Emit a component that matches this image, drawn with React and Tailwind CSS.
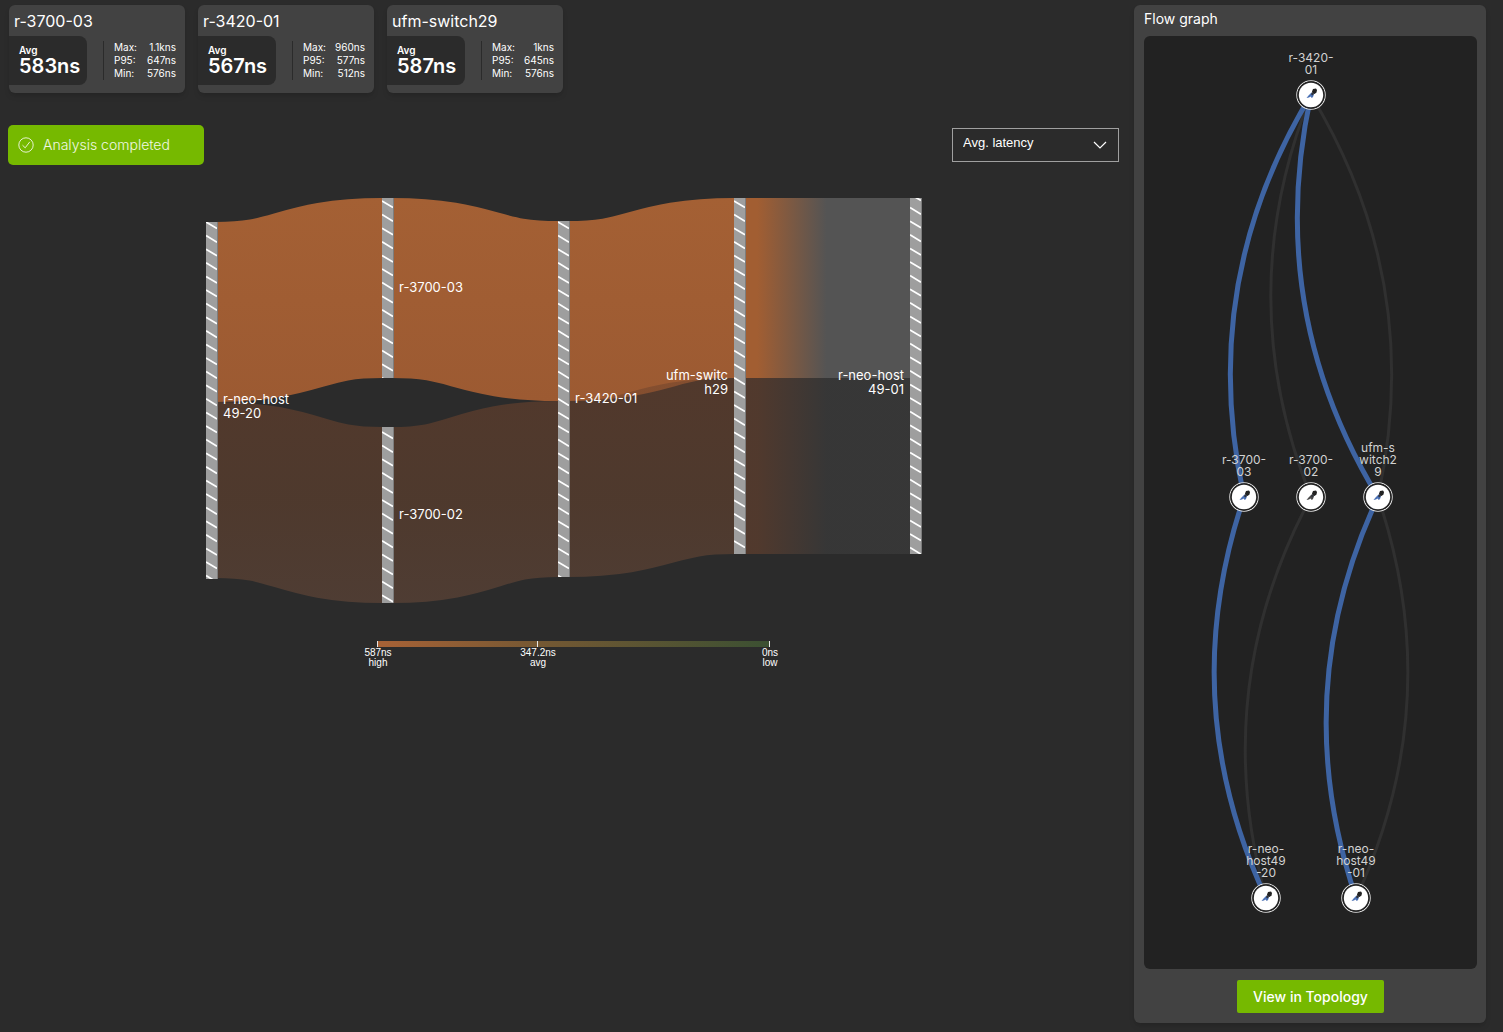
import { useId } from "react";

const stats = [
  { name: "r-3700-03", avg: "583ns", max: "1.1kns", p95: "647ns", min: "576ns" },
  { name: "r-3420-01", avg: "567ns", max: "960ns", p95: "577ns", min: "512ns" },
  { name: "ufm-switch29", avg: "587ns", max: "1kns", p95: "645ns", min: "576ns" },
];

function StatCard({ name, avg, max, p95, min }) {
  const rows = [
    ["Max:", max],
    ["P95:", p95],
    ["Min:", min],
  ];
  return (
    <section className="w-44 rounded-md bg-[#424242] pb-2 shadow-md">
      <h2 className="px-[5px] pt-1 pb-[3px] text-base leading-6 text-white">{name}</h2>
      <div className="flex items-center">
        <div className="w-[78px] rounded-r-lg bg-[#2b2b2b] py-2 pl-2.5 text-white">
          <div className="text-[10px] leading-3 font-semibold">Avg</div>
          <div className="text-xl leading-[21px] font-semibold">{avg}</div>
        </div>
        <dl className="ml-4 flex-1 border-l border-[#2b2b2b] pr-[9px] pl-2.5 text-[10px] leading-[13px] text-white">
          {rows.map(([label, value]) => (
            <div key={label} className="flex justify-between">
              <dt>{label}</dt>
              <dd>{value}</dd>
            </div>
          ))}
        </dl>
      </div>
    </section>
  );
}

const NODE_W = 11;
const bars = [
  { x: 0, y: 32, h: 357, phase: 32 },
  { x: 176, y: 8, h: 180, phase: 11 },
  { x: 176, y: 237, h: 176, phase: 242 },
  { x: 352, y: 31, h: 356, phase: 32 },
  { x: 528, y: 8, h: 356, phase: 11 },
  { x: 704, y: 8, h: 356, phase: 4 },
];

function Bar({ x, y, h, phase }) {
  const id = useId();
  const count = Math.ceil(h / 13.6) + 2;
  return (
    <g>
      <clipPath id={id}>
        <rect x={x + 1} y={y} width={NODE_W} height={h} />
      </clipPath>
      <rect x={x + 1} y={y} width={NODE_W + 1} height={h} fill="#7d7d7d" />
      <rect x={x + 1} y={y} width={NODE_W} height={h} fill="#9e9e9e" />
      <g clipPath={`url(#${id})`} stroke="#ffffff" strokeWidth="1.7">
        {Array.from({ length: count }, (_, i) => {
          const top = phase + (i - 1) * 13.6;
          return <line key={i} x1={x + 1} y1={top} x2={x + 12} y2={top + 6.6} />;
        })}
      </g>
    </g>
  );
}

function band(x, y1, y2) {
  const a = x + NODE_W;
  const b = x + 177;
  const m = (a + b) / 2;
  return `M${a} ${y1}C${m} ${y1} ${m} ${y2} ${b} ${y2}`;
}

const barLabels = [
  { x: 18, y: 214, lines: ["r-neo-host", "49-20"] },
  { x: 194, y: 102, lines: ["r-3700-03"] },
  { x: 194, y: 329, lines: ["r-3700-02"] },
  { x: 370, y: 213, lines: ["r-3420-01"] },
  { x: 523, y: 190, lines: ["ufm-switc", "h29"], end: true },
  { x: 699, y: 190, lines: ["r-neo-host", "49-01"], end: true },
];

const ticks = [
  { x: 173, value: "587ns", label: "high" },
  { x: 333, value: "347.2ns", label: "avg" },
  { x: 565, value: "0ns", label: "low" },
];

function Sankey() {
  return (
    <svg
      viewBox="0 0 717 490"
      className="mx-auto block w-full max-w-[717px]"
      role="img"
      aria-label="Average latency per hop"
    >
      <defs>
        <linearGradient id="warm" gradientUnits="userSpaceOnUse" x1="0" y1="8" x2="0" y2="212">
          <stop offset="0" stopColor="#a46034" />
          <stop offset="1" stopColor="#9c5a32" />
        </linearGradient>
        <linearGradient id="dim" gradientUnits="userSpaceOnUse" x1="0" y1="212" x2="0" y2="413">
          <stop offset="0" stopColor="#70442d" />
          <stop offset="0.5" stopColor="#6b452f" />
          <stop offset="1" stopColor="#6c4b3a" />
        </linearGradient>
        <linearGradient id="warmOut" gradientUnits="userSpaceOnUse" x1="539" y1="0" x2="704" y2="0">
          <stop offset="0.08" stopColor="#a25e32" />
          <stop offset="0.5" stopColor="#545454" />
        </linearGradient>
        <linearGradient id="dimOut" gradientUnits="userSpaceOnUse" x1="539" y1="0" x2="704" y2="0">
          <stop offset="0.08" stopColor="#70452f" />
          <stop offset="0.5" stopColor="#404040" />
        </linearGradient>
        <linearGradient id="scale">
          <stop offset="0" stopColor="#a86236" />
          <stop offset="0.41" stopColor="#755833" />
          <stop offset="1" stopColor="#3b5032" />
        </linearGradient>
      </defs>

      <g fill="none" stroke="url(#warm)" strokeWidth="180">
        <path d={band(0, 122, 98)} />
        <path d={band(176, 98, 121)} />
        <path d={band(352, 121, 98)} />
      </g>
      <rect x="539" y="8" width="166" height="180" fill="url(#warmOut)" />
      <g fill="none" stroke="url(#dim)" strokeWidth="176" strokeOpacity="0.55">
        <path d={band(0, 300, 325)} />
        <path d={band(176, 325, 299)} />
        <path d={band(352, 299, 276)} />
      </g>
      <rect x="539" y="188" width="166" height="176" fill="url(#dimOut)" fillOpacity="0.55" />

      {bars.map((b) => (
        <Bar key={`${b.x}-${b.y}`} {...b} />
      ))}

      {barLabels.map((l) => (
        <text
          key={l.lines.join("")}
          y={l.y}
          textAnchor={l.end ? "end" : "start"}
          className="fill-white text-[13px]"
        >
          {l.lines.map((line, i) => (
            <tspan key={line} x={l.x} y={l.y + i * 14}>
              {line}
            </tspan>
          ))}
        </text>
      ))}

      <rect x="172" y="451" width="393" height="6" fill="url(#scale)" />
      {ticks.map((t) => (
        <g key={t.label}>
          <rect x={t.x - 1} y="451" width="1" height="6" fill="#e5e5e5" />
          <text
            textAnchor="middle"
            className="fill-white font-['Liberation_Sans',sans-serif] text-[10px]"
          >
            <tspan x={t.x} y="466">
              {t.value}
            </tspan>
            <tspan x={t.x} y="476">
              {t.label}
            </tspan>
          </text>
        </g>
      ))}
    </svg>
  );
}

const graphNodes = {
  spine: { x: 167, y: 59, lines: ["r-3420-", "01"], blue: true },
  a: { x: 100, y: 461, lines: ["r-3700-", "03"], blue: true },
  b: { x: 167, y: 461, lines: ["r-3700-", "02"], blue: false },
  c: { x: 234, y: 461, lines: ["ufm-s", "witch2", "9"], blue: true },
  h20: { x: 122, y: 862, lines: ["r-neo-", "host49", "-20"], blue: true },
  h01: { x: 212, y: 862, lines: ["r-neo-", "host49", "-01"], blue: true },
};

const graphEdges = [
  { from: "spine", to: "b" },
  { from: "c", to: "spine" },
  { from: "b", to: "h20" },
  { from: "h01", to: "c" },
  { from: "spine", to: "a", active: true },
  { from: "spine", to: "c", active: true },
  { from: "a", to: "h20", active: true },
  { from: "c", to: "h01", active: true },
];

function edgePath(from, to) {
  const p = graphNodes[from];
  const q = graphNodes[to];
  const dx = q.x - p.x;
  const dy = q.y - p.y;
  const cx = (p.x + q.x) / 2 - dy * 0.2;
  const cy = (p.y + q.y) / 2 + dx * 0.2;
  return `M${p.x} ${p.y}Q${cx} ${cy} ${q.x} ${q.y}`;
}

function GraphNode({ x, y, lines, blue }) {
  return (
    <g>
      <circle cx={x} cy={y} r="14.2" fill="#222222" fillOpacity="0.45" stroke="#e4e4e4" strokeWidth="1.1" />
      <circle cx={x} cy={y} r="13" fill="none" stroke="#222222" strokeWidth="1.4" />
      <circle cx={x} cy={y} r="12.2" fill="#ffffff" />
      <g transform={`translate(${x} ${y})`}>
        <path d="M2 -6L5 -6.5L6 -5L5.5 -2.5L3.5 -1L1.5 -1.5L1 -3.5Z" fill="#222222" />
        <path d="M0.5 -2.5L3 -0.8L2 2L0.8 3L-0.5 1.6L-2 2.4L-4.5 3L-2.5 0.5Z" fill={blue ? "#4a70b4" : "#4a4a4a"} />
        <path d="M1 -2.8L3 -1.2L1.5 0.6L0 -0.8Z" fill="#30343c" />
      </g>
      <text textAnchor="middle" className="fill-[#d2d2d2] text-[12px]">
        {lines.map((line, i) => (
          <tspan key={line} x={x} y={y - 21 - (lines.length - 1 - i) * 12}>
            {line}
          </tspan>
        ))}
      </text>
    </g>
  );
}

function FlowGraph() {
  return (
    <svg viewBox="0 0 333 933" className="block h-full w-full" role="img" aria-label="Flow graph">
      {graphEdges.map((e) => (
        <path
          key={`${e.from}-${e.to}`}
          d={edgePath(e.from, e.to)}
          fill="none"
          stroke={e.active ? "#3e64a3" : "#303030"}
          strokeWidth={e.active ? 5 : 3}
        />
      ))}
      {Object.entries(graphNodes).map(([id, n]) => (
        <GraphNode key={id} {...n} />
      ))}
    </svg>
  );
}

export default function App() {
  return (
    <div className="flex min-h-screen bg-[#2b2b2b] pt-[5px] pr-[17px] pb-[9px] pl-2 font-['Inter',sans-serif] font-normal">
      <main className="mr-[15px] min-w-0 flex-1">
        <div className="flex flex-wrap gap-[13px] pl-px">
          {stats.map((s) => (
            <StatCard key={s.name} {...s} />
          ))}
        </div>

        <div className="mt-8 flex items-center justify-between">
          <div
            role="status"
            className="flex h-10 w-[196px] items-center gap-[9px] rounded-[5px] bg-[#76b900] pl-2.5 text-sm font-light text-white/90"
          >
            <svg viewBox="0 0 16 16" className="size-4" fill="none" stroke="currentColor" aria-hidden="true">
              <circle cx="8" cy="8" r="7.2" strokeWidth="0.9" />
              <path d="M4.5 8.2L7.2 10.8L11.8 4.8" strokeWidth="0.9" />
            </svg>
            Analysis completed
          </div>
          <div className="relative w-[167px]">
            <select
              aria-label="Metric"
              className="block h-[34px] w-full appearance-none border border-[#a0a0a0] bg-transparent pr-8 pb-1 pl-2.5 font-['Liberation_Sans',sans-serif] text-[13px] font-normal text-white"
            >
              <option>Avg. latency</option>
            </select>
            <svg
              viewBox="0 0 14 8"
              className="pointer-events-none absolute top-[13px] right-3 h-2 w-3.5"
              fill="none"
              stroke="#ffffff"
              strokeWidth="1.2"
              aria-hidden="true"
            >
              <path d="M1 1L7 7L13 1" />
            </svg>
          </div>
        </div>

        <div className="mt-[25px]">
          <Sankey />
        </div>
      </main>

      <aside className="flex w-[352px] flex-col rounded-md bg-[#424242] pr-[9px] pb-2.5 pl-2.5 shadow-md">
        <h2 className="pt-1 pb-[7px] text-sm leading-5 text-white">Flow graph</h2>
        <div className="min-h-0 flex-1 rounded-md bg-[#222222]">
          <FlowGraph />
        </div>
        <button
          type="button"
          className="mt-[11px] h-[33px] w-[147px] self-center rounded-xs bg-[#76b900] text-sm font-medium text-white"
        >
          View in Topology
        </button>
      </aside>
    </div>
  );
}
